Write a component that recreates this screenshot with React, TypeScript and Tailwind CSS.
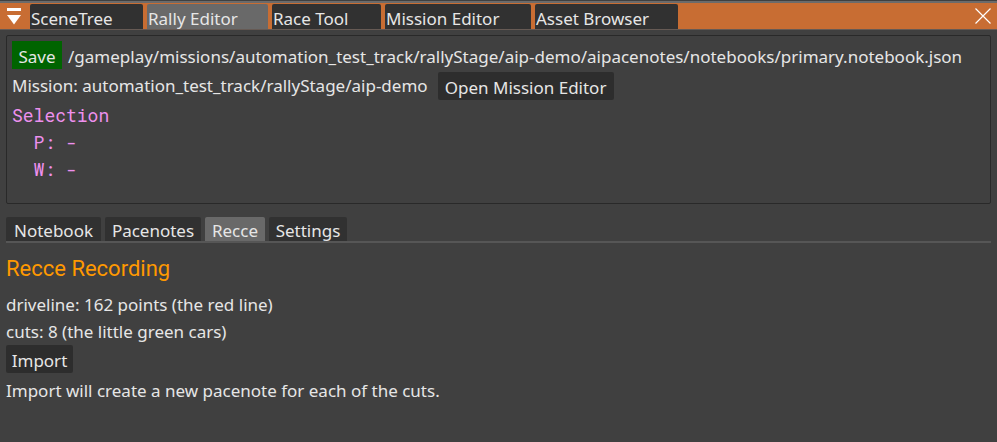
import React from "react";

type Tab = { label: string; width: string; active?: boolean };

const windowTabs: Tab[] = [
  { label: "SceneTree", width: "w-[113px]" },
  { label: "Rally Editor", width: "w-[121px]", active: true },
  { label: "Race Tool", width: "w-[109px]" },
  { label: "Mission Editor", width: "w-[146px]" },
  { label: "Asset Browser", width: "w-[143px]" },
];

const editorTabs: Tab[] = [
  { label: "Notebook", width: "w-[95px]" },
  { label: "Pacenotes", width: "w-24" },
  { label: "Recce", width: "w-[60px]", active: true },
  { label: "Settings", width: "w-[78px]" },
];

function TitleBar() {
  return (
    <header className="flex h-[29px] items-stretch border-t-2 border-b border-t-[#6b6b6b] border-b-[#665a54] bg-[#c86d33]">
      <button aria-label="Window menu" className="flex w-[30px] shrink-0 items-start pt-[5px] pl-[7px]">
        <svg width="14" height="17" viewBox="0 0 14 17" fill="#fff">
          <rect width="14" height="3" />
          <path d="M0 7h14L7 16.5z" />
        </svg>
      </button>
      <div role="tablist" className="flex gap-1 pt-px">
        {windowTabs.map((t) => (
          <button
            key={t.label}
            role="tab"
            aria-selected={!!t.active}
            className={`${t.width} ${t.active ? "bg-[#696969]" : "bg-[#313131]"} rounded-t-[2px] pl-px pt-1 text-left leading-5 whitespace-nowrap`}
          >
            {t.label}
          </button>
        ))}
      </div>
      <button aria-label="Close" className="ml-auto flex items-start pt-[5px] pr-[6px]">
        <svg width="16" height="16" viewBox="0 0 16 16" stroke="#fff" strokeWidth="1.2">
          <path d="M.5.5l15 15M15.5.5l-15 15" />
        </svg>
      </button>
    </header>
  );
}

export default function App() {
  return (
    <div className="min-h-screen bg-[#404040] pt-px font-['Noto_Sans','Open_Sans',sans-serif] text-[17px] text-[#e6e6e6]">
      <TitleBar />
      <main className="px-[6px] pt-[5px]">
        <section className="h-[169px] rounded-[2px] border border-[#292929] px-[5px] pt-[5px]">
          <div className="flex items-center gap-[6px]">
            <button className="h-7 w-[50px] shrink-0 bg-[#006400] pt-1 leading-6">Save</button>
            <span className="pt-1 leading-6 whitespace-nowrap">
              /gameplay/missions/automation_test_track/rallyStage/aip-demo/aipacenotes/notebooks/primary.notebook.json
            </span>
          </div>
          <div className="mt-[3px] flex gap-[10px]">
            <span className="pt-[2px] leading-6 whitespace-nowrap">Mission: automation_test_track/rallyStage/aip-demo</span>
            <button className="h-7 w-44 rounded-[2px] bg-[#2d2d2d] pt-1 leading-6 whitespace-nowrap">Open Mission Editor</button>
          </div>
          <pre className="mt-[2px] font-['Roboto_Mono','DejaVu_Sans_Mono',monospace] text-[18px] leading-[27px] text-[#ee90ee]">
            {"Selection\n  P: -\n  W: -"}
          </pre>
        </section>

        <div role="tablist" className="mt-[13px] flex gap-1 border-b-2 border-[#565656]">
          {editorTabs.map((t) => (
            <button
              key={t.label}
              role="tab"
              aria-selected={!!t.active}
              className={`${t.width} ${t.active ? "bg-[#696969]" : "bg-[#313131]"} h-6 rounded-t-[2px] pt-1 leading-5 whitespace-nowrap`}
            >
              {t.label}
            </button>
          ))}
        </div>

        <section className="flex flex-col items-start">
          <h2 className="mt-3 font-['Roboto',sans-serif] text-[22px] leading-7 text-[#ff9900]">Recce Recording</h2>
          <p className="mt-2 leading-[27px]">driveline: 162 points (the red line)</p>
          <p className="leading-[27px]">cuts: 8 (the little green cars)</p>
          <button className="h-7 w-[67px] rounded-[2px] bg-[#2d2d2d] pt-1 leading-6">Import</button>
          <p className="mt-1 leading-[27px]">Import will create a new pacenote for each of the cuts.</p>
        </section>
      </main>
    </div>
  );
}
